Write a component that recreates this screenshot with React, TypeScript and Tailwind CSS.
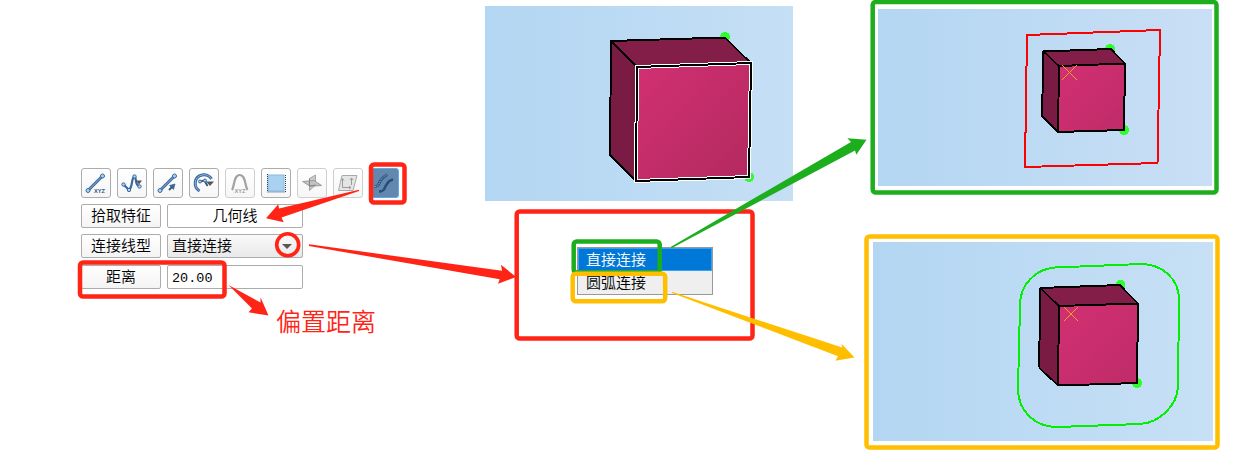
import React from "react";

type Pt = [number, number];
const pts = (list: Pt[]) => list.map((p) => p.join(",")).join(" ");

interface CubeProps {
  id: string;
  // back-left, back-right, front top-left, front top-right, front bottom-right, front bottom-left, left bottom
  v: Pt[];
  dots: Pt[];
  highlight?: boolean;
}

function Cube({ id, v, dots, highlight }: CubeProps) {
  const [a, b, c, d, e, f, g] = v;
  return (
    <g>
      <defs>
        <linearGradient id={id} x1="0" y1="0" x2="1" y2="1">
          <stop offset="0" stopColor="#d23072" />
          <stop offset="1" stopColor={highlight ? "#b3295f" : "#bf2b68"} />
        </linearGradient>
      </defs>
      {dots.map((p, i) => (
        <circle key={i} cx={p[0]} cy={p[1]} r="5" fill="#2dff2d" shapeRendering="crispEdges" />
      ))}
      <g shapeRendering="crispEdges" strokeLinejoin="round" fill="none">
        <polygon points={pts([a, b, d, c])} fill="#831e48" />
        <polygon points={pts([a, c, f, g])} fill="#791b42" />
        <polygon points={pts([c, d, e, f])} fill={`url(#${id})`} />
        <polyline points={pts([g, a, b])} stroke="#000" strokeWidth="2" />
        <polyline points={pts([a, c])} stroke="#000" strokeWidth="1.6" />
        <polyline points={pts([b, d])} stroke="#000" strokeWidth="1.6" />
        <polyline points={pts([g, f])} stroke="#000" strokeWidth="1.6" />
        {highlight && <polygon points={pts([c, d, e, f])} stroke="#fff" strokeWidth="4" strokeLinejoin="miter" />}
        <polygon points={pts([c, d, e, f])} stroke="#000" strokeWidth="2" />
      </g>
    </g>
  );
}

function ToolButton({ children, faded }: { children: React.ReactNode; faded?: boolean }) {
  return (
    <button
      className={`flex size-[30px] items-center justify-center rounded-[3px] border bg-gradient-to-b from-white to-[#f6f6f6] ${
        faded ? "border-[#cfcfcf]" : "border-[#acacac]"
      }`}
    >
      <svg className="size-7" viewBox="1 1 28 28" fill="none">
        {children}
      </svg>
    </button>
  );
}

function Node({ x, y, r = 2 }: { x: number; y: number; r?: number }) {
  return <circle cx={x} cy={y} r={r} fill="#a9d5f5" stroke="#3a689c" strokeWidth="1" />;
}

function Toolbar() {
  return (
    <div className="flex gap-1.5">
      <ToolButton>
        <path d="M7 22.500L21.500 8" stroke="#3a689c" strokeWidth="3" />
        <path d="M7 22.500L21.500 8" stroke="#8fb4d8" strokeWidth="1" />
        <Node x={7} y={22.500} />
        <Node x={21.500} y={8} />
        <text x="13" y="24.500" fontSize="6" fontWeight="700" fill="#2f5580" textLength="11" lengthAdjust="spacingAndGlyphs" fontFamily="Liberation Sans">XYZ</text>
      </ToolButton>
      <ToolButton>
        <path d="M6.500 16.500L12 22C16 19 14 10 17.500 8.500C20 9 17 18 23 18.500" stroke="#3a689c" strokeWidth="2.200" />
        <path d="M19 12.500h6l-3 4z" fill="#565656" />
        <Node x={6.500} y={16.500} r={1.700} />
        <Node x={12} y={22} r={1.700} />
        <Node x={17.500} y={8.500} r={1.700} />
        <Node x={22.500} y={18.500} r={1.700} />
      </ToolButton>
      <ToolButton>
        <path d="M7 22.500L21.500 8" stroke="#3a689c" strokeWidth="3" />
        <path d="M7 22.500L21.500 8" stroke="#8fb4d8" strokeWidth="1" />
        <Node x={7} y={22.500} />
        <Node x={21.500} y={8} />
        <path d="M16 22l3-3" stroke="#2f5580" strokeWidth="1.800" />
        <path d="M16.500 17.500l5.500-1.500-1.500 5.500z" fill="#3a689c" stroke="#2f5580" strokeWidth=".6" />
      </ToolButton>
      <ToolButton>
        <path d="M10.500 23C4 19 5 8.500 13 7C17 6 21 8 22.500 11" stroke="#3a689c" strokeWidth="3" />
        <path d="M10.500 23C4 19 5 8.500 13 7C17 6 21 8 22.500 11" stroke="#8fb4d8" strokeWidth="1" />
        <path d="M10.500 13.500l5-1 3 5.500" stroke="#2f5580" strokeWidth="1.800" />
        <path d="M17 13.500h8l-4 4.500z" fill="#565656" />
        <Node x={11} y={13.500} r={1.500} />
        <Node x={16} y={12.500} r={1.500} />
      </ToolButton>
      <ToolButton faded>
        <path d="M7 22C9.500 19 8.500 7 14.700 7S20 19 22.500 22" stroke="#a2a2a2" strokeWidth="2.200" />
        <rect x="10" y="20" width="10" height="5" fill="#fafafa" />
        <text x="9.500" y="24.800" fontSize="6" fontWeight="700" fill="#9a9a9a" textLength="11" lengthAdjust="spacingAndGlyphs" fontFamily="Liberation Sans">XYZ</text>
      </ToolButton>
      <ToolButton>
        <rect x="7" y="7" width="16" height="16" fill="#a9d1f0" stroke="#8db9de" />
        <path d="M6.500 6v18h18V6" stroke="#24466e" strokeWidth="1" strokeDasharray="1 1" />
      </ToolButton>
      <ToolButton faded>
        <path d="M12.500 10.500L18.500 7v10l-6 5.500z" fill="#cacaca" stroke="#a5a5a5" />
        <path d="M5.700 13.500L17 12.500l7.500 5-11.500.8z" fill="#c2c2c2" stroke="#9a9a9a" />
        <path d="M12.500 10.500V18l6-1" stroke="#858585" />
      </ToolButton>
      <ToolButton faded>
        <path d="M9 7.500h15L20 22.500H5.500z" fill="#e5e5e5" stroke="#aaa" />
        <path d="M9.500 19.500V11M8 12.500L9.500 10.500l1.500 2M9.500 19.500h8M16 18l2 1.500-2 1.500M18.500 17V10.500M17 12l1.500-2 1.500 2" stroke="#9a9a9a" />
      </ToolButton>
      <button className="flex size-[30px] items-center justify-center rounded-[3px] border border-[#58aaf2] bg-[#6488ad]">
        <svg className="size-7" viewBox="1 1 28 28" fill="none">
          <path d="M5.500 18.500c5 0 4-3 6-6s3-4 7-6" stroke="#2d5585" strokeWidth="3" />
          <path d="M5.500 18.500c5 0 4-3 6-6s3-4 7-6" stroke="#89acd0" strokeWidth="1" strokeDasharray="1.500 1" />
          <path d="M10 23.500c6 0 5-3 7-6s2-5 7-6" stroke="#254e82" strokeWidth="2.600" />
        </svg>
      </button>
    </div>
  );
}

const box = "flex h-6 items-center rounded-[2px] border border-[#acacac]";
const label = "justify-center bg-gradient-to-b from-white to-[#f4f4f4] pb-[3px]";

function Form() {
  return (
    <div className="mt-1.5 grid grid-cols-[80px_136px] gap-x-1.5 text-[15px] leading-none text-black">
      <div className={`${box} ${label}`}>拾取特征</div>
      <div className={`${box} justify-center bg-white pb-[3px]`}>几何线</div>
      <div className={`${box} ${label} mt-1.5`}>连接线型</div>
      <div className={`${box} mt-1.5 justify-between bg-gradient-to-b from-[#f9f9f9] to-[#e9e9e9] pr-2.5 pl-1`}>
        <span className="pb-1">直接连接</span>
        <svg className="h-[5px] w-2.5" viewBox="0 0 10 5">
          <path d="M0 0h10L5 5z" fill="#565656" />
        </svg>
      </div>
      <div className={`${box} ${label} mt-[7px]`}>距离</div>
      <div className={`${box} mt-[7px] bg-white pt-[3px] pl-1 font-['Liberation_Mono'] text-[13.500px]`}>20.00</div>
    </div>
  );
}

function Annotations() {
  return (
    <svg className="pointer-events-none absolute inset-0 h-[459px] w-[1250px]" viewBox="0 0 1250 459" fill="none">
      <g stroke="#ff2416" strokeWidth="4.500">
        <rect x="371" y="164.500" width="33.500" height="38" rx="3" />
        <rect x="80" y="262.500" width="144.500" height="34" rx="3" />
        <circle cx="287.700" cy="244.800" r="11" strokeWidth="3.600" />
        <rect x="516.700" y="211.500" width="235.800" height="127" rx="3" />
      </g>
      <g fill="#ff2416">
        <polygon points="359,189.800 279,208.500 278.300,204.300 266,218.300 283.700,222.300 281.500,217.500 359,191" />
        <polygon points="309,244.300 502,270.700 501,264.700 516,277 498,283.700 499.700,279.300 309,246" />
        <polygon points="228.500,285 260.500,302.500 260.500,297.300 268.500,315.500 248.500,312.300 252,308.500" />
      </g>
      <g stroke="#1dae1d" strokeWidth="4.500">
        <rect x="573.700" y="241.500" width="86" height="31" rx="3" />
        <rect x="872.700" y="2" width="343.800" height="190.500" rx="3" />
      </g>
      <polygon fill="#1dae1d" points="671,246.700 851,142 847.300,138.300 866.500,139.700 856.300,154.700 855,150.500 671.500,248.200" />
      <g stroke="#ffbf00" strokeWidth="4.500">
        <rect x="572.700" y="273.700" width="92.500" height="27.500" rx="3" />
        <rect x="866.500" y="236.500" width="351" height="211" rx="3" />
      </g>
      <polygon fill="#ffbf00" points="672,291.800 842.300,347.500 841.300,343.500 854.500,357.500 835.300,360.700 838,356.200 672,293" />
    </svg>
  );
}

const scene = "block bg-gradient-to-r from-[#b3d6f2]";

export default function App() {
  return (
    <main className="relative flex h-[459px] w-[1250px] overflow-hidden bg-white font-['Noto_Sans_CJK_SC',sans-serif] font-[350]">
      <section className="w-[485px] pt-[168px] pl-[81px]">
        <Toolbar />
        <Form />
        <p className="mt-[13px] ml-[195px] text-[25px] leading-9 text-[#ff2416]">偏置距离</p>
      </section>

      <section className="w-[388px] pt-1.5">
        <svg className={`${scene} h-[195px] w-[308px] to-[#c5dff5]`} viewBox="485 6 308 195">
          <Cube
            id="face-main"
            highlight
            v={[[611, 41], [725, 37.500], [637, 67], [751, 63], [749, 177], [636, 181], [610, 155]]}
            dots={[[725, 37], [749, 177]]}
          />
        </svg>
        <ul className="mt-[46px] ml-[92px] h-12 w-[136px] border border-[#999] bg-[#efefef] text-[15px]">
          <li className="h-[23px] border border-[#3b9ff0] bg-[#0078d7] pl-[7px] leading-[19px] text-white">直接连接</li>
          <li className="pl-2 leading-[21px] text-black">圆弧连接</li>
        </ul>
      </section>

      <section className="pt-[9px]">
        <svg className={`${scene} ml-[5px] h-[177px] w-[334px] to-[#c9dff5]`} viewBox="878 9 334 177">
          <Cube
            id="face-line"
            v={[[1043.500, 51.500], [1111, 49], [1059, 66], [1125, 63.500], [1124, 130], [1058, 132], [1042, 116]]}
            dots={[[1110, 49], [1124, 130]]}
          />
          <polygon points="1027,35 1160,30 1157.500,163 1025,167" fill="none" stroke="#f00" strokeWidth="2" shapeRendering="crispEdges" />
          <path d="M1062 65l15 15M1077 65l-15 15" stroke="#f5a020" shapeRendering="crispEdges" />
        </svg>
        <svg className={`${scene} mt-14 h-[199px] w-[340px] to-[#c7e0f5]`} viewBox="873 242 340 199">
          <Cube
            id="face-arc"
            v={[[1040.500, 288], [1120, 285], [1059, 306], [1138, 303.500], [1137, 383], [1058, 385.500], [1039, 367.500]]}
            dots={[[1120.500, 285], [1137, 383]]}
          />
          <path
            d="M1055 267.500L1141 264C1162 264 1179 279 1179 299L1178 387C1177 405 1160 423 1140 424L1057 427C1035 427 1018 411 1018 389L1020 305C1020 285 1035 269 1055 267.500Z"
            fill="none"
            stroke="#00f000"
            strokeWidth="2"
            shapeRendering="crispEdges"
          />
          <path d="M1064 307l14 14M1078 307l-14 14" stroke="#f5a020" shapeRendering="crispEdges" />
        </svg>
      </section>

      <Annotations />
    </main>
  );
}
